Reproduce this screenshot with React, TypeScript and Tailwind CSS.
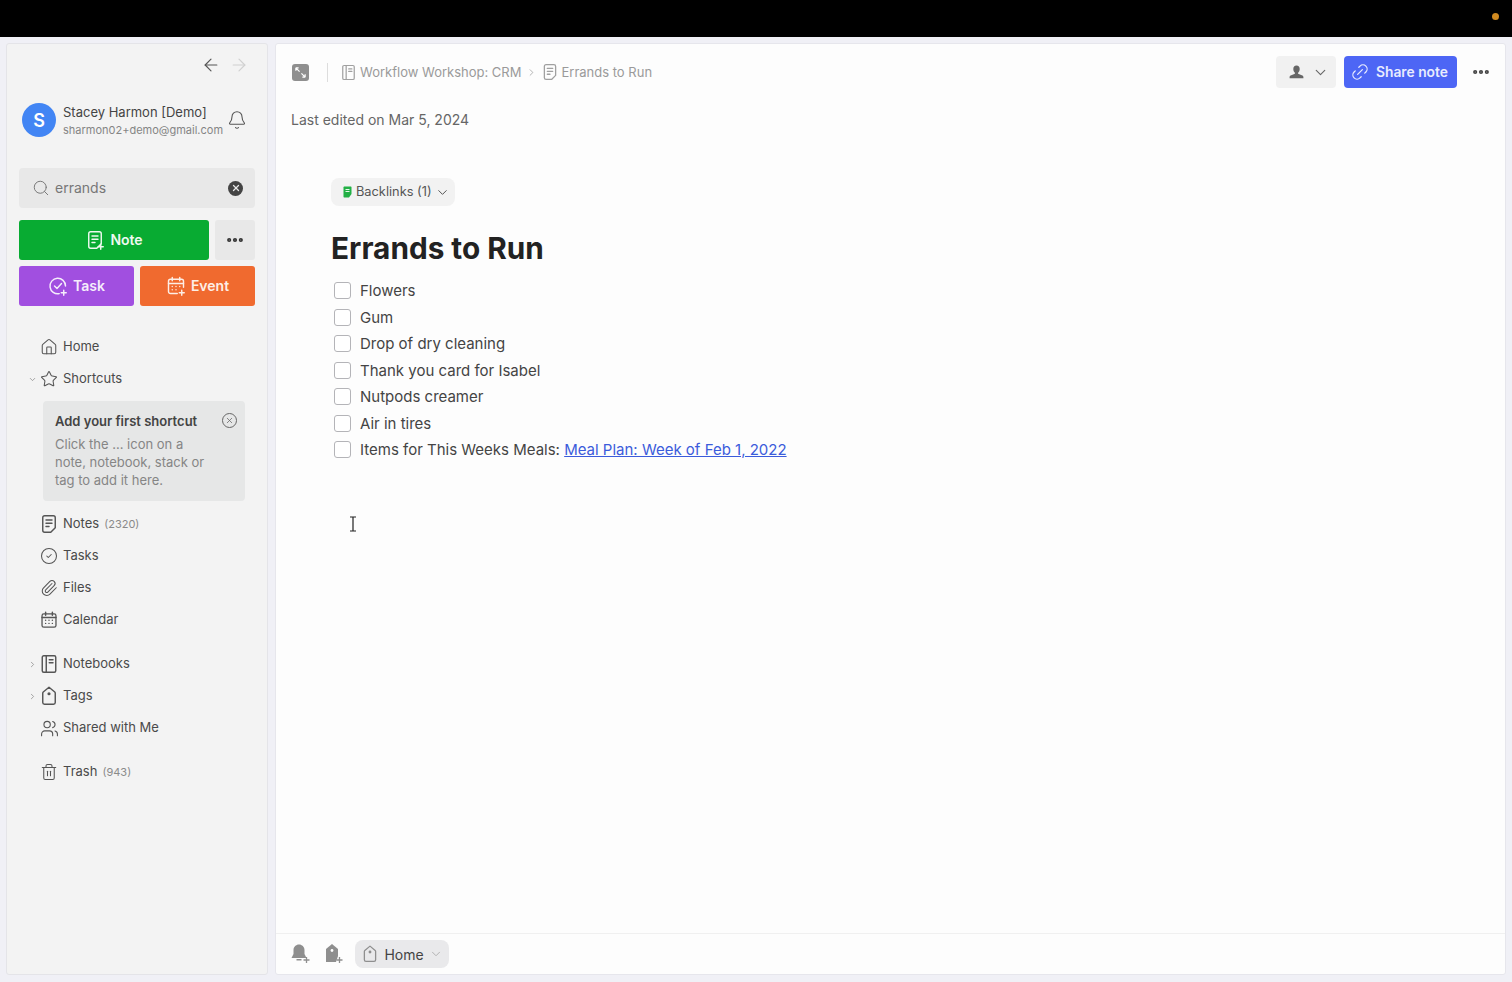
import React from "react";
import { ArrowLeft, ArrowRight, Bell, Search, Ellipsis, Home, ChevronDown, ChevronRight, Star, CircleCheck, Paperclip, Trash2, Users, Link2, X } from "lucide-react";

const S = { fill: "none", stroke: "currentColor", strokeWidth: 1.15, strokeLinecap: "round" as const, strokeLinejoin: "round" as const };

function NoteIcon({ size = 16, plus = false, className = "" }: { size?: number; plus?: boolean; className?: string }) {
  return (
    <svg width={size} height={size} viewBox="0 0 16 16" className={className} {...S}>
      <path d="M3 3C3 2.100 3.600 1.400 4.500 1.400h7c.9 0 1.500.7 1.500 1.600v8l-3.600 3.600H4.500c-.9 0-1.500-.7-1.500-1.600z" />
      <path d="M5.600 4.800h4.800M5.600 7.400h4.800M5.600 10h2.400" />
      {plus && <path d="M12.600 11.400v4M10.600 13.400h4" />}
    </svg>
  );
}
function NotebookIcon({ size = 16, className = "" }: { size?: number; className?: string }) {
  return (
    <svg width={size} height={size} viewBox="0 0 16 16" className={className} {...S}>
      <rect x="2.600" y="1.400" width="10.800" height="13.200" rx="1.200" />
      <path d="M5.800 1.400v13.200M8.200 4.600h3M8.200 7h3" />
    </svg>
  );
}
function TagIcon({ size = 16, className = "" }: { size?: number; className?: string }) {
  return (
    <svg width={size} height={size} viewBox="0 0 16 16" className={className} {...S}>
      <path d="M8 1 12.600 4.800c.3.3.4.6.4 1v7.400c0 .8-.6 1.400-1.400 1.400H4.400c-.8 0-1.400-.6-1.400-1.400V5.800c0-.4.1-.7.4-1z" />
      <circle cx="8" cy="6.200" r=".7" fill="currentColor" />
    </svg>
  );
}
function CalendarDots({ size = 18 }: { size?: number }) {
  return (
    <svg width={size} height={size} viewBox="0 0 16 16" {...S}>
      <rect x="1.800" y="2.600" width="12.400" height="11.800" rx="1.600" />
      <path d="M5 1.200v2.600M11 1.200v2.600M1.800 5.800h12.400M5 8.200h.01M8 8.200h.01M11 8.200h.01M5 11h.01M8 11h.01M11 11h.01" strokeWidth="1.300" />
    </svg>
  );
}
function Row({ icon, label, count, chevron, mt }: { icon: React.ReactNode; label: string; count?: string; chevron?: "down" | "right"; mt?: boolean }) {
  return (
    <div className={`flex h-8 items-center text-[13px] text-[#4a4a4a] ${mt ? "mt-3" : ""}`}>
      <span className="ml-[8px] flex w-[10px] justify-center text-[#8a8a8a]">
        {chevron === "down" && <ChevronDown size={9} strokeWidth={2} />}
        {chevron === "right" && <ChevronRight size={9} strokeWidth={2} />}
      </span>
      <span className="flex w-[24px] justify-center text-[#555555]">{icon}</span>
      <span className="ml-[2px]">{label}</span>
      {count && <span className="ml-[5px] pt-[1px] text-[11px] text-[#8a8a8a]">{count}</span>}
    </div>
  );
}
function Check({ label, children }: { label?: string; children?: React.ReactNode }) {
  return (
    <div className="flex h-[26.5px] items-center text-[15px] text-[#444444]">
      <span className="mr-[9px] mb-[1px] ml-[3px] h-[17px] w-[17px] rounded-[3px] border border-[#b4b4b8] bg-white" />
      {label}
      {children}
    </div>
  );
}

export default function App() {
  return (
    <div className="flex h-[982px] w-[1512px] flex-col overflow-hidden bg-[#f0f0f6] font-['Inter',sans-serif]">
      <div className="flex h-[37px] shrink-0 items-center justify-end bg-black pr-[13px] pb-[4px]">
        <span className="h-[7px] w-[7px] rounded-full bg-[#d08a20]" />
      </div>
      <div className="flex min-h-0 flex-1 gap-[7px] pt-[6px] pr-[6px] pb-[7px] pl-[6px]">
        <aside className="flex w-[262px] shrink-0 flex-col rounded-[3px] border border-[#e4e4e8] bg-[#f3f3f3] px-[12px]">
          <div className="mt-[11px] flex h-[20px] items-center justify-end gap-[8px] pr-[6px]">
            <ArrowLeft size={20} strokeWidth={1.4} className="text-[#555555]" />
            <ArrowRight size={20} strokeWidth={1.4} className="text-[#d0d0d0]" />
          </div>
          <div className="mt-[27px] flex h-[36px] items-center">
            <span className="ml-[3px] flex h-[34px] w-[34px] shrink-0 items-center justify-center rounded-full bg-[#4285f4] text-[18px] font-semibold text-white">S</span>
            <div className="ml-[7px] flex flex-col pt-[2px]">
              <span className="text-[13px] leading-[18px] text-[#444444]">Stacey Harmon [Demo]</span>
              <span className="text-[11px] leading-[18px] text-[#858585]">sharmon02+demo@gmail.com</span>
            </div>
            <Bell size={20} strokeWidth={1.3} className="ml-[4px] shrink-0 text-[#555555]" />
          </div>
          <div className="mt-[30px] flex h-[40px] items-center rounded-[4px] bg-[#e8e8e8] pr-[12px] pl-[13px]">
            <Search size={18} strokeWidth={1.3} className="text-[#777777]" />
            <span className="ml-[5px] flex-1 pb-[1px] text-[14px] text-[#777777]">errands</span>
            <span className="flex h-[15px] w-[15px] items-center justify-center rounded-full bg-[#444444]">
              <X size={10} strokeWidth={3} className="text-[#e8e8e8]" />
            </span>
          </div>
          <div className="mt-[12px] flex gap-[6px]">
            <div className="flex h-[40px] w-[190px] items-center justify-center gap-[5px] rounded-[3px] bg-[#08ab32] pb-[1px] text-[14px] font-semibold text-[#eef9f0]">
              <NoteIcon size={20} plus />
              Note
            </div>
            <div className="flex h-[40px] flex-1 items-center justify-center rounded-[3px] bg-[#e8e8e8] text-[#333333]">
              <Ellipsis size={20} strokeWidth={3} />
            </div>
          </div>
          <div className="mt-[6px] flex gap-[6px]">
            <div className="flex h-[40px] w-[115px] items-center justify-center gap-[5px] rounded-[3px] bg-[#a14fe0] pb-[1px] text-[14px] font-semibold text-[#f5edfb]">
              <svg width="20" height="20" viewBox="0 0 16 16" {...S}>
                <path d="M14 8a6.200 6.200 0 1 0-5 6.100" />
                <path d="m5.200 8 2 2 3.600-4M12.600 11.400v4M10.600 13.400h4" />
              </svg>
              Task
            </div>
            <div className="flex h-[40px] flex-1 items-center justify-center gap-[5px] rounded-[3px] bg-[#f06a2f] pb-[1px] text-[14px] font-semibold text-[#fdeee6]">
              <svg width="20" height="20" viewBox="0 0 16 16" {...S}>
                <path d="M9 14H3.600C2.700 14 2 13.300 2 12.400V4.200c0-.9.7-1.600 1.600-1.600h8.800c.9 0 1.600.7 1.600 1.600V9" />
                <path d="M5 1.200v2.600M11 1.200v2.600M2 6h12M5 8.400h.01M8 8.400h.01M11 8.400h.01M5 11h.01M8 11h.01M12.600 11.400v4M10.600 13.400h4" />
              </svg>
              Event
            </div>
          </div>
          <div className="mt-[25px] flex flex-col">
            <Row icon={<Home size={18} strokeWidth={1.4} />} label="Home" />
            <Row icon={<Star size={18} strokeWidth={1.4} />} label="Shortcuts" chevron="down" />
            <div className="mt-[6px] mb-[7px] ml-[24px] flex h-[100px] w-[202px] flex-col rounded-[4px] bg-[#e6e7e7] px-[12px] pt-[11px]">
              <div className="flex items-center justify-between">
                <span className="text-[13px] leading-[18px] font-semibold text-[#444444]">Add your first shortcut</span>
                <span className="mr-[-4px] mb-[2px] flex h-[15px] w-[15px] items-center justify-center rounded-full border border-[#666666]">
                  <X size={9} strokeWidth={2} className="text-[#666666]" />
                </span>
              </div>
              <p className="mt-[5px] text-[13px] leading-[18px] text-[#858585]">
                Click the ... icon on a
                <br />
                note, notebook, stack or
                <br />
                tag to add it here.
              </p>
            </div>
            <Row icon={<NoteIcon size={20} />} label="Notes" count="(2320)" />
            <Row icon={<CircleCheck size={18} strokeWidth={1.4} />} label="Tasks" />
            <Row icon={<Paperclip size={18} strokeWidth={1.4} />} label="Files" />
            <Row icon={<CalendarDots size={18} />} label="Calendar" />
            <Row icon={<NotebookIcon size={20} />} label="Notebooks" chevron="right" mt />
            <Row icon={<TagIcon size={20} />} label="Tags" chevron="right" />
            <Row icon={<Users size={19} strokeWidth={1.4} />} label="Shared with Me" />
            <Row icon={<Trash2 size={18} strokeWidth={1.4} />} label="Trash" count="(943)" mt />
          </div>
        </aside>
        <main className="flex min-w-0 flex-1 flex-col rounded-[3px] border border-[#e6e6ec] bg-[#fdfdfd]">
          <div className="mt-[12px] flex h-[32px] items-center pr-[14px] pl-[16px]">
            <span className="flex h-[17px] w-[17px] items-center justify-center rounded-[3px] bg-[#8f8f8f]">
              <svg width="13" height="13" viewBox="0 0 14 14" fill="none" stroke="white" strokeWidth="1.300">
                <path d="M2 2l4 4M2 2h3M2 2v3M12 12 8 8M12 12H9M12 12V9" />
              </svg>
            </span>
            <span className="mr-[12px] ml-[18px] h-[19px] w-px bg-[#dddddd]" />
            <NotebookIcon size={17} className="mr-[3px] text-[#a0a0a0]" />
            <span className="pt-[1px] text-[13px] text-[#9a9a9a]">Workflow Workshop: CRM</span>
            <ChevronRight size={11} strokeWidth={1.6} className="mr-[4px] ml-[5px] text-[#9a9a9a]" />
            <NoteIcon size={18} className="mr-[2px] text-[#a0a0a0]" />
            <span className="pt-[1px] text-[13px] text-[#9a9a9a]">Errands to Run</span>
            <div className="ml-auto flex items-center">
              <div className="flex h-[32px] w-[60px] items-center rounded-[4px] bg-[#f1f1f1] pl-[12px] text-[#666666]">
                <svg width="17" height="17" viewBox="0 0 16 16" fill="currentColor">
                  <path d="M8 1.500c2 0 3 1.400 3 3.200 0 1.500-.6 2.800-1.500 3.500v1l4 1.600c.8.3 1 .9 1 1.700v1H1.500v-1c0-.8.2-1.400 1-1.700l4-1.600v-1C5.600 7.500 5 6.200 5 4.700c0-1.800 1-3.200 3-3.200z" />
                </svg>
                <ChevronDown size={17} strokeWidth={1.6} className="ml-[7px]" />
              </div>
              <div className="ml-[8px] flex h-[32px] w-[113px] items-center rounded-[4px] bg-[#4d66f5] pl-[6px] text-[13.8px] font-semibold text-[#e9ecfe]">
                <Link2 size={20} strokeWidth={1.5} className="-rotate-45" />
                <span className="ml-[6px]">Share note</span>
              </div>
              <Ellipsis size={20} strokeWidth={3} className="ml-[14px] text-[#444444]" />
            </div>
          </div>
          <div className="mt-[22px] pl-[15px] text-[14px] leading-[20px] text-[#666666]">Last edited on Mar 5, 2024</div>
          <div className="flex-1 pl-[55px]">
            <div className="mt-[48px] flex h-[28px] w-[124px] items-center gap-[3px] rounded-[8px] bg-[#f2f2f2] pl-[11px] text-[12.8px] text-[#555555]">
              <svg width="11" height="12" viewBox="0 0 11 12">
                <path d="M1.500 1.500C1.500.9 2 .5 2.500.5h6c.6 0 1 .4 1 1v6.500L7 11.500H2.500c-.6 0-1-.4-1-1z" fill="#22b045" />
                <path d="M3.500 3.500h4M3.500 5.500h4" stroke="white" strokeWidth="0.9" />
              </svg>
              Backlinks (1)
              <ChevronDown size={15} strokeWidth={1.6} />
            </div>
            <h1 className="mt-[22px] text-[29.75px] leading-[40px] font-bold text-[#222222]">Errands to Run</h1>
            <div className="mt-[10px] flex flex-col">
              <Check label="Flowers" />
              <Check label="Gum" />
              <Check label="Drop of dry cleaning" />
              <Check label="Thank you card for Isabel" />
              <Check label="Nutpods creamer" />
              <Check label="Air in tires" />
              <Check>
                Items for This Weeks Meals:&nbsp;<span className="text-[#3b5bdb] underline">Meal Plan: Week of Feb 1, 2022</span>
              </Check>
            </div>
            <svg width="8" height="16" viewBox="0 0 8 16" className="mt-[52px] ml-[18px]" fill="none" stroke="#222222" strokeWidth="1.200">
              <path d="M1 1h6M1 15h6M4 1v14" />
            </svg>
          </div>
          <div className="flex h-[41px] items-center border-t border-[#f0f0f0] pl-[15px]">
            <svg width="20" height="20" viewBox="0 0 20 20" fill="#8f8f8f">
              <path d="M8 0.500c3 0 5.500 2.400 5.500 5.500v4l2 4H.5l2-4V6C2.500 2.900 5 .5 8 .5zM5.500 15h5v1.500h-5z" />
              <path d="M15.500 13v6M12.500 16h6" stroke="#8f8f8f" strokeWidth="1.300" />
            </svg>
            <svg width="20" height="20" viewBox="0 0 20 20" className="ml-[13px]" fill="#8f8f8f">
              <path d="M8 0 14 5v7l-2 6H2V5z" />
              <circle cx="8" cy="6.500" r="1.400" fill="white" />
              <path d="M15.500 13v6M12.500 16h6" stroke="#8f8f8f" strokeWidth="1.300" />
            </svg>
            <div className="ml-[11px] flex h-[28px] w-[94px] items-center justify-center gap-[5px] rounded-[8px] bg-[#e9e9eb] text-[14px] text-[#444444]">
              <TagIcon size={18} className="text-[#8f8f8f]" />
              Home
              <ChevronDown size={14} strokeWidth={1.5} className="text-[#aaaaaa]" />
            </div>
          </div>
        </main>
      </div>
    </div>
  );
}
